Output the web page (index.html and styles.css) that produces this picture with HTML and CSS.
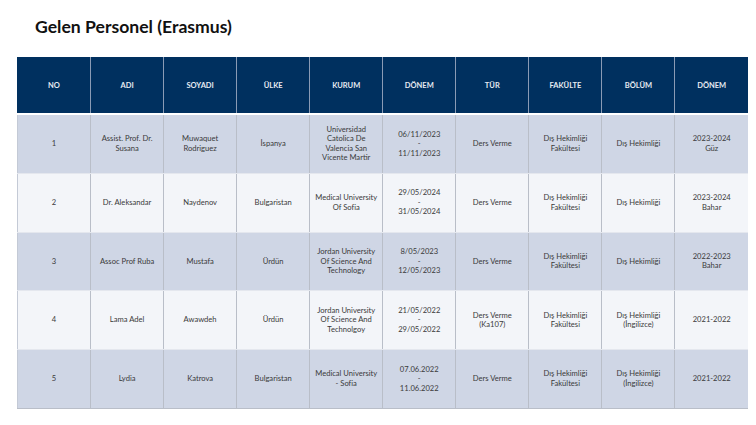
FILE: index.html
```html
<!DOCTYPE html>
<html lang="tr">
<head>
<meta charset="utf-8">
<title>Gelen Personel (Erasmus)</title>
<link rel="stylesheet" href="styles.css">
</head>
<body>
<h1 class="title">Gelen Personel (Erasmus)</h1>
<table class="grid">
  <thead>
    <tr>
      <th>NO</th><th>ADI</th><th>SOYADI</th><th>ÜLKE</th><th>KURUM</th><th>DÖNEM</th><th>TÜR</th><th>FAKÜLTE</th><th>BÖLÜM</th><th>DÖNEM</th>
    </tr>
  </thead>
  <tbody>
    <tr class="odd">
      <td>1</td><td>Assist. Prof. Dr.<br>Susana</td><td>Muwaquet<br>Rodriguez</td><td>İspanya</td><td>Universidad<br>Catolica De<br>Valencia San<br>Vicente Martir</td><td>06/11/2023<br>-<br>11/11/2023</td><td>Ders Verme</td><td>Dış Hekimliği<br>Fakültesi</td><td>Dış Hekimliği</td><td>2023-2024<br>Güz</td>
    </tr>
    <tr class="even">
      <td>2</td><td>Dr. Aleksandar</td><td>Naydenov</td><td>Bulgaristan</td><td>Medical University<br>Of Sofia</td><td>29/05/2024<br>-<br>31/05/2024</td><td>Ders Verme</td><td>Dış Hekimliği<br>Fakültesi</td><td>Dış Hekimliği</td><td>2023-2024<br>Bahar</td>
    </tr>
    <tr class="odd">
      <td>3</td><td>Assoc Prof Ruba</td><td>Mustafa</td><td>Ürdün</td><td>Jordan University<br>Of Science And<br>Technology</td><td>8/05/2023<br>-<br>12/05/2023</td><td>Ders Verme</td><td>Dış Hekimliği<br>Fakültesi</td><td>Dış Hekimliği</td><td>2022-2023<br>Bahar</td>
    </tr>
    <tr class="even">
      <td>4</td><td>Lama Adel</td><td>Awawdeh</td><td>Ürdün</td><td>Jordan University<br>Of Science And<br>Technolgoy</td><td>21/05/2022<br>-<br>29/05/2022</td><td>Ders Verme<br>(Ka107)</td><td>Dış Hekimliği<br>Fakültesi</td><td>Dış Hekimliği<br>(İngilizce)</td><td>2021-2022</td>
    </tr>
    <tr class="odd">
      <td>5</td><td>Lydia</td><td>Katrova</td><td>Bulgaristan</td><td>Medical University<br>- Sofia</td><td>07.06.2022<br>-<br>11.06.2022</td><td>Ders Verme</td><td>Dış Hekimliği<br>Fakültesi</td><td>Dış Hekimliği<br>(İngilizce)</td><td>2021-2022</td>
    </tr>
  </tbody>
</table>
</body>
</html>
```
FILE: styles.css
```css
html, body {
  margin: 0;
  padding: 0;
  background: #ffffff;
}
body {
  font-family: Lato, "Liberation Sans", sans-serif;
  color: #3a3a3a;
}
.title {
  margin: 0;
  padding: 17px 0 0 35px;
  height: 42px;
  box-sizing: border-box;
  font-family: Lato, "Liberation Sans", sans-serif;
  font-size: 17.6px;
  font-weight: 700;
  color: #111111;
  line-height: 20px;
}
.grid {
  margin: 15px 0 0 17px;
  width: 731px;
  table-layout: fixed;
  border-collapse: collapse;
}
.grid th {
  height: 56px;
  padding: 0;
  background: #00305f;
  color: #e6ebf2;
  font-size: 7.5px;
  font-weight: 700;
  text-align: center;
  vertical-align: middle;
  border-left: 1px solid #8a9bb5;
  border-bottom: 2px solid #ffffff;
}
.grid th:first-child {
  border-left: 1px solid #00305f;
}
.grid td {
  height: 57.8px;
  padding: 0 2px;
  font-size: 7.6px;
  line-height: 9.6px;
  text-align: center;
  vertical-align: middle;
  border-left: 1px solid #b9bec8;
  border-bottom: 1px solid #e4e7ee;
}
.grid td:first-child {
  border-left: 1px solid #c4cad6;
}
.grid tr.odd td {
  background: #cfd6e5;
}
.grid tr.even td {
  background: #f3f5f9;
}
.grid tbody tr:last-child td {
  border-bottom: 1px solid #b9bec8;
}
```
